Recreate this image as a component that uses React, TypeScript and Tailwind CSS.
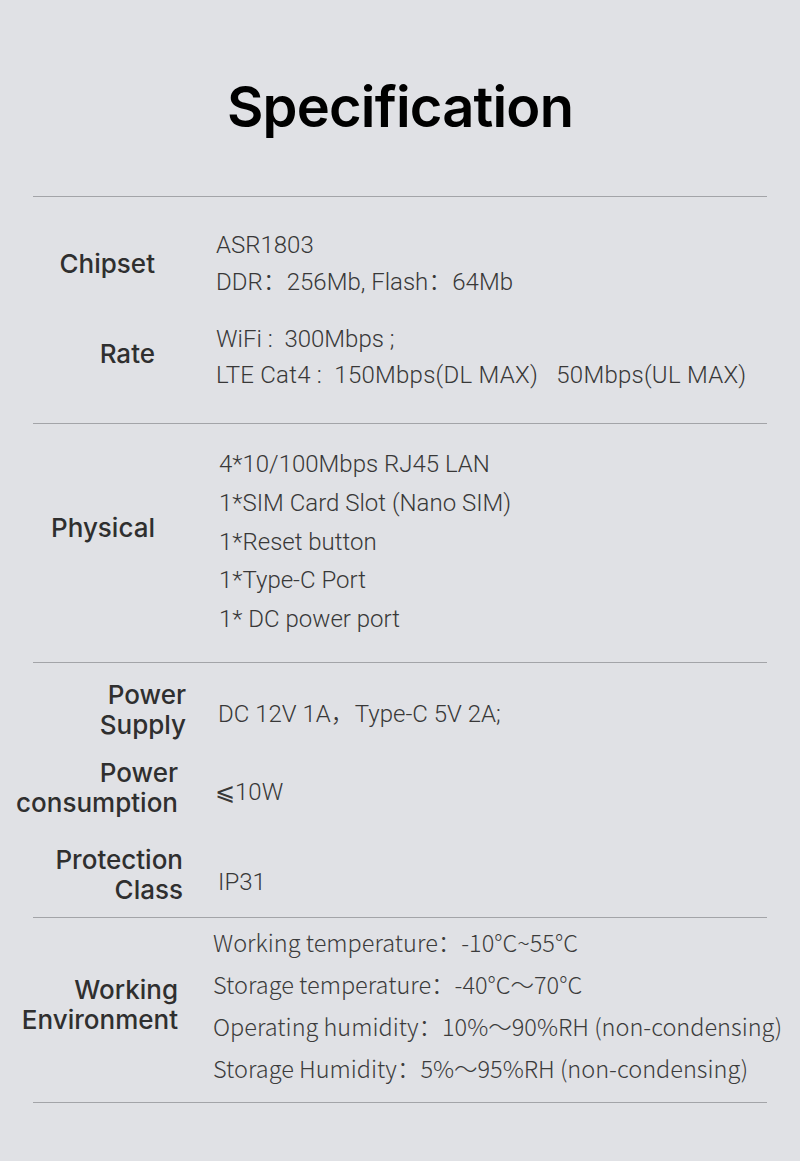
import React from 'react';

const valueFont = { fontFamily: 'Roboto, "Noto Sans CJK SC", sans-serif' };
const labelFont = { fontFamily: 'Inter, "Noto Sans", sans-serif' };

function Label({ lines, width, className = '' }: { lines: string[]; width: string; className?: string }) {
  return (
    <div
      className={`${width} ${className} shrink-0 text-right text-[26px] leading-[30px] font-medium text-[#2f2f2f]`}
      style={labelFont}
    >
      {lines.map((l) => (
        <div key={l}>{l}</div>
      ))}
    </div>
  );
}

const Divider = () => <div className="mx-[33px] border-t border-[#a3a4a8]" />;

export default function App() {
  return (
    <div className="w-[800px] h-[1161px] bg-[#e0e1e5] text-[#383838]">
      {/* Title */}
      <div className="pt-[72px] pb-[54px] text-center">
        <h1 className="text-[56px] leading-[70px] font-semibold text-black tracking-[-0.8px]" style={{ fontFamily: 'Inter, sans-serif' }}>
          Specification
        </h1>
      </div>

      <Divider />

      {/* Chipset + Rate */}
      <div className="pt-[30px] pb-[30px]">
        <div className="flex items-center">
          <Label lines={['Chipset']} width="w-[155px]" />
          <div className="ml-[61px] text-[24px] leading-[37px] font-light" style={valueFont}>
            <div>ASR1803</div>
            <div>DDR：256Mb, Flash：64Mb</div>
          </div>
        </div>
        <div className="flex items-center mt-[20px]">
          <Label lines={['Rate']} width="w-[155px]" className="mb-[6px]" />
          <div className="ml-[61px] text-[24px] leading-[36px] font-light whitespace-pre" style={valueFont}>
            <div>{'WiFi :  300Mbps ;'}</div>
            <div className="tracking-[0.25px]">{'LTE Cat4 :  150Mbps(DL MAX)   50Mbps(UL MAX)'}</div>
          </div>
        </div>
      </div>

      <Divider />

      {/* Physical */}
      <div className="flex items-center pt-[21px] pb-[23px]">
        <Label lines={['Physical']} width="w-[155px]" className="mb-[27px]" />
        <div className="ml-[64px] text-[24px] leading-[38.75px] font-light" style={valueFont}>
          <div>4*10/100Mbps RJ45 LAN</div>
          <div>1*SIM Card Slot (Nano SIM)</div>
          <div>1*Reset button</div>
          <div>1*Type-C Port</div>
          <div>1* DC power port</div>
        </div>
      </div>

      <Divider />

      {/* Power */}
      <div className="pt-[17px] pb-[12px]">
        <div className="flex items-start">
          <Label lines={['Power', 'Supply']} width="w-[186px]" />
          <div className="ml-[32px] mt-[19px] text-[24px] leading-[30px] font-light whitespace-pre" style={valueFont}>
            {'DC 12V 1A，Type-C 5V 2A;'}
          </div>
        </div>
        <div className="flex items-start mt-[18px]">
          <Label lines={['Power', 'consumption']} width="w-[178px]" />
          <div className="ml-[37px] mt-[19px] text-[24px] leading-[30px] font-light" style={valueFont}>⩽10W</div>
        </div>
        <div className="flex items-start mt-[27px]">
          <Label lines={['Protection', 'Class']} width="w-[183px]" />
          <div className="ml-[35px] mt-[22px] text-[24px] leading-[30px] font-light" style={valueFont}>IP31</div>
        </div>
      </div>

      <Divider />

      {/* Working environment */}
      <div className="flex items-center pt-[3px] pb-[13px]">
        <Label lines={['Working', 'Environment']} width="w-[178px]" />
        <div
          className="ml-[35px] text-[23.5px] leading-[42px] font-light text-[#3c3c3c]"
          style={{ fontFamily: '"Noto Sans CJK SC", sans-serif' }}
        >
          <div>Working temperature：-10°C~55°C</div>
          <div>Storage temperature：-40°C～70°C</div>
          <div>Operating humidity：10%～90%RH (non-condensing)</div>
          <div>Storage Humidity：5%～95%RH (non-condensing)</div>
        </div>
      </div>

      <Divider />
    </div>
  );
}
